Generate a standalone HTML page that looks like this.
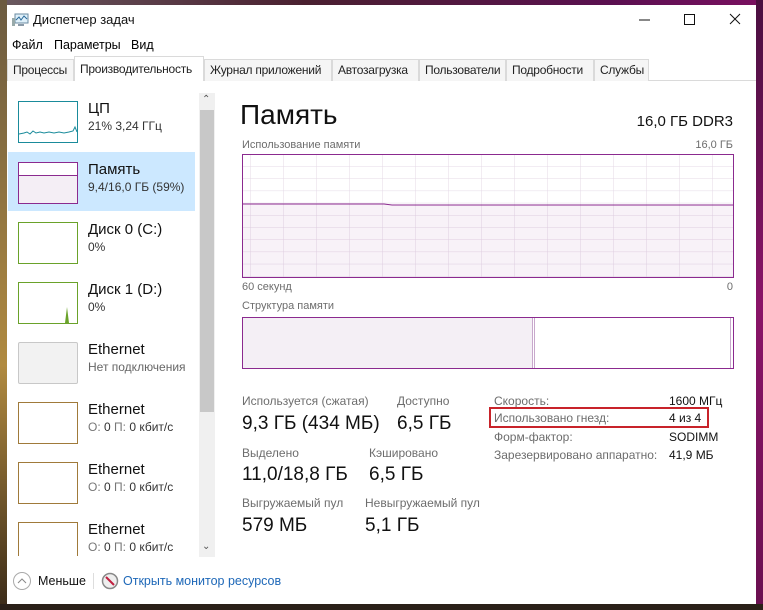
<!DOCTYPE html>
<html><head><meta charset="utf-8"><style>
*{margin:0;padding:0;box-sizing:border-box}
body{width:763px;height:610px;overflow:hidden;background:#3a1d2a;font-family:"Liberation Sans","DejaVu Sans",sans-serif;position:relative}
.bgt{position:absolute;left:0;top:0;width:763px;height:6px;background:linear-gradient(90deg,#6a5a60,#4a2030 40%,#5a1050 80%,#7a1060)}
.bgl{position:absolute;left:0;top:0;width:7px;height:610px;background:linear-gradient(#6b5a40,#b08a40 60%,#3a2a18)}
.bgr{position:absolute;right:0;top:0;width:7px;height:610px;background:linear-gradient(#4a1040,#8a1468 50%,#6a1050)}
.bgb{position:absolute;left:0;bottom:0;width:763px;height:6px;background:#2a2018}
.win{position:absolute;left:7px;top:5px;width:749px;height:599px;background:#fff}
.a{position:absolute;white-space:nowrap}
.tab{position:absolute;top:59px;height:22px;background:#f5f5f5;border:1px solid #dadada;border-bottom:none;font-size:12px;letter-spacing:-0.25px;color:#222;padding:3px 0 0 5px;white-space:nowrap;overflow:hidden}
.thumb{position:absolute;left:18px;width:60px;height:42px;border:1px solid}
.t1{position:absolute;left:88px;font-size:15px;color:#111}
.t2{position:absolute;left:88px;font-size:12px;color:#333}
.lbl{position:absolute;font-size:12px;color:#6d6d6d;white-space:nowrap}
.val{position:absolute;font-size:19px;color:#111;white-space:nowrap}
.rl{position:absolute;left:494px;font-size:12px;color:#6d6d6d}
.rv{position:absolute;left:669px;font-size:12px;color:#111}
</style></head><body>
<div class="bgt"></div><div class="bgl"></div><div class="bgr"></div><div class="bgb"></div>
<div class="win"></div>
<svg class="a" style="left:12px;top:13px" width="17" height="14"><rect x="3" y="1" width="13" height="9" fill="#dff0fa" stroke="#6a8aa0"/><polyline points="4,7 7,4 9,7 12,3 15,6" fill="none" stroke="#2a6a9a"/><rect x="0" y="5" width="3" height="8" fill="#9aa"/><rect x="6" y="11" width="6" height="2" fill="#8a9aa8"/></svg>
<div class="a" style="left:33px;top:12px;font-size:13px;color:#111">Диспетчер задач</div>
<svg class="a" style="left:630px;top:12px" width="120" height="16"><line x1="9" y1="8" x2="20" y2="8" stroke="#111"/><rect x="54.5" y="2.5" width="10" height="10" fill="none" stroke="#111"/><path d="M100 2 L110 12 M110 2 L100 12" stroke="#111"/></svg>
<div class="a" style="left:12px;top:38px;font-size:12.5px">Файл</div>
<div class="a" style="left:54px;top:38px;font-size:12.5px">Параметры</div>
<div class="a" style="left:131px;top:38px;font-size:12.5px">Вид</div>
<div class="a" style="left:7px;top:80px;width:749px;height:1px;background:#dadada"></div>
<div class="tab" style="left:7px;width:67px">Процессы</div>
<div class="tab" style="left:74px;top:56px;height:25px;width:130px;background:#fff;padding-top:5px">Производительность</div>
<div class="tab" style="left:204px;width:128px">Журнал приложений</div>
<div class="tab" style="left:332px;width:87px">Автозагрузка</div>
<div class="tab" style="left:419px;width:87px">Пользователи</div>
<div class="tab" style="left:506px;width:88px">Подробности</div>
<div class="tab" style="left:594px;width:55px">Службы</div>

<div class="a" style="left:8px;top:152px;width:187px;height:59px;background:#cce8ff"></div>
<div class="thumb" style="top:101px;border-color:#1a8b9b"><svg width="58" height="40"><polyline points="0,32 5,31 8,30 11,32 14,29 17,31 21,30 25,31 30,30 35,31 40,30 45,31 50,30 54,29 56,25 58,30" fill="none" stroke="#1a8b9b"/></svg></div>
<div class="t1" style="top:100px">ЦП</div><div class="t2" style="top:119px">21% 3,24 ГГц</div>
<div class="thumb" style="top:162px;border-color:#8b2a8f;background:linear-gradient(#fff 0,#fff 13px,#f4eef5 13px)"><div style="position:absolute;left:0;top:12px;width:58px;height:1px;background:#8b2a8f"></div></div>
<div class="t1" style="top:161px">Память</div><div class="t2" style="top:180px">9,4/16,0 ГБ (59%)</div>
<div class="thumb" style="top:222px;border-color:#6aa22a"></div>
<div class="t1" style="top:221px">Диск 0 (C:)</div><div class="t2" style="top:240px">0%</div>
<div class="thumb" style="top:282px;border-color:#6aa22a"><svg width="58" height="40"><path d="M46 40 L48 24 L50 40Z" fill="#6aa22a"/></svg></div>
<div class="t1" style="top:281px">Диск 1 (D:)</div><div class="t2" style="top:300px">0%</div>
<div class="thumb" style="top:342px;border-color:#c8c8c8;background:#f2f2f2;border-radius:2px"></div>
<div class="t1" style="top:341px">Ethernet</div><div class="t2" style="top:360px;color:#666">Нет подключения</div>
<div class="thumb" style="top:402px;border-color:#a07a3a"></div>
<div class="t1" style="top:401px">Ethernet</div><div class="t2" style="top:420px"><span style="color:#777">О:</span> 0 <span style="color:#777">П:</span> 0 кбит/с</div>
<div class="thumb" style="top:462px;border-color:#a07a3a"></div>
<div class="t1" style="top:461px">Ethernet</div><div class="t2" style="top:480px"><span style="color:#777">О:</span> 0 <span style="color:#777">П:</span> 0 кбит/с</div>
<div class="thumb" style="top:522px;height:34px;border-color:#a07a3a;border-bottom:none"></div>
<div class="t1" style="top:521px">Ethernet</div><div class="t2" style="top:540px"><span style="color:#777">О:</span> 0 <span style="color:#777">П:</span> 0 кбит/с</div>

<div class="a" style="left:199px;top:93px;width:16px;height:464px;background:#f0f0f0"></div>
<div class="a" style="left:200px;top:110px;width:14px;height:302px;background:#c8c8c8"></div>
<div class="a" style="left:202px;top:94px;font-size:10px;color:#555">&#8963;</div>
<div class="a" style="left:202px;top:541px;font-size:10px;color:#555">&#8964;</div>

<div class="a" style="left:240px;top:99px;font-size:28px;color:#111">Память</div>
<div class="a" style="right:30px;top:113px;font-size:15px;color:#111">16,0 ГБ DDR3</div>
<div class="lbl" style="left:242px;top:139px;font-size:11px">Использование памяти</div>
<div class="lbl" style="right:30px;top:139px;font-size:11px">16,0 ГБ</div>
<svg class="a" style="left:242px;top:154px" width="492" height="124">
<defs><pattern id="g" x="-25" y="0" width="33" height="12.2" patternUnits="userSpaceOnUse"><path d="M0 0V13M0 0H33" stroke="#e4d8e6" fill="none"/></pattern></defs>
<rect width="492" height="124" fill="url(#g)"/>
<path d="M1 50 L142 50 L150 51 L491 51 L491 123 L1 123Z" fill="#8b2a8f" fill-opacity="0.06"/>
<path d="M1 50 L142 50 L150 51 L491 51" stroke="#8b2a8f" fill="none"/>
<rect x="0.5" y="0.5" width="491" height="123" fill="none" stroke="#8b2a8f"/>
</svg>
<div class="lbl" style="left:242px;top:281px;font-size:11px">60 секунд</div>
<div class="lbl" style="right:30px;top:281px;font-size:11px">0</div>
<div class="lbl" style="left:242px;top:300px;font-size:11px">Структура памяти</div>
<svg class="a" style="left:242px;top:317px" width="492" height="52">
<rect x="1" y="1" width="289" height="50" fill="#f4eff5"/>
<line x1="290.5" y1="1" x2="290.5" y2="51" stroke="#c8a8cc"/><line x1="292.5" y1="1" x2="292.5" y2="51" stroke="#c8a8cc"/>
<line x1="488.5" y1="1" x2="488.5" y2="51" stroke="#c8a8cc"/>
<rect x="0.5" y="0.5" width="491" height="51" fill="none" stroke="#8b2a8f"/>
</svg>

<div class="lbl" style="left:242px;top:394px">Используется (сжатая)</div>
<div class="val" style="left:242px;top:413px">9,3 ГБ (434 МБ)</div>
<div class="lbl" style="left:397px;top:394px">Доступно</div>
<div class="val" style="left:397px;top:413px">6,5 ГБ</div>
<div class="lbl" style="left:242px;top:446px">Выделено</div>
<div class="val" style="left:242px;top:464px">11,0/18,8 ГБ</div>
<div class="lbl" style="left:369px;top:446px">Кэшировано</div>
<div class="val" style="left:369px;top:464px">6,5 ГБ</div>
<div class="lbl" style="left:242px;top:496px">Выгружаемый пул</div>
<div class="val" style="left:242px;top:515px">579 МБ</div>
<div class="lbl" style="left:365px;top:496px">Невыгружаемый пул</div>
<div class="val" style="left:365px;top:515px">5,1 ГБ</div>

<div class="rl" style="top:394px">Скорость:</div><div class="rv" style="top:394px">1600 МГц</div>
<div class="rl" style="top:411px">Использовано гнезд:</div><div class="rv" style="top:411px">4 из 4</div>
<div class="rl" style="top:430px">Форм-фактор:</div><div class="rv" style="top:430px">SODIMM</div>
<div class="rl" style="top:448px">Зарезервировано аппаратно:</div><div class="rv" style="top:448px">41,9 МБ</div>
<div class="a" style="left:489px;top:407px;width:220px;height:21px;border:2px solid #c8232a"></div>

<svg class="a" style="left:12px;top:571px" width="20" height="20"><circle cx="10" cy="10" r="8.5" fill="none" stroke="#aaa"/><path d="M6 12 L10 8 L14 12" fill="none" stroke="#888"/></svg>
<div class="a" style="left:38px;top:574px;font-size:12.5px;color:#111">Меньше</div>
<div class="a" style="left:93px;top:573px;width:1px;height:16px;background:#ddd"></div>
<svg class="a" style="left:101px;top:572px" width="18" height="18"><circle cx="9" cy="9" r="7.5" fill="#eee" stroke="#888" stroke-width="1.5"/><path d="M5 5 L13 13" stroke="#c02040" stroke-width="2"/></svg>
<div class="a" style="left:123px;top:574px;font-size:12.5px;color:#1e68b8">Открыть монитор ресурсов</div>
</body></html>
